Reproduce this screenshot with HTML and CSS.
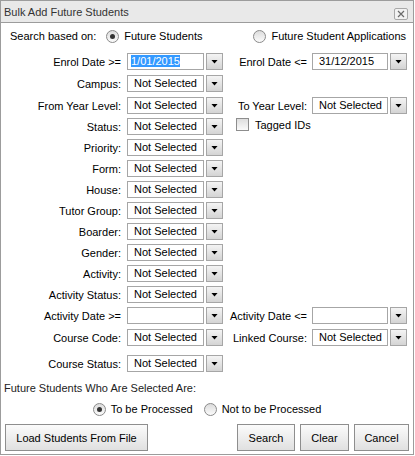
FILE: index.html
```html
<!DOCTYPE html>
<html>
<head>
<meta charset="utf-8">
<title>Bulk Add Future Students</title>
<link rel="stylesheet" href="styles.css">
</head>
<body>
<div class="dialog">
  <div class="titlebar">
    <span class="title">Bulk Add Future Students</span>
    <span class="close"><svg width="8" height="8" viewBox="0 0 8 8"><path d="M1 1L7 7M7 1L1 7" stroke="#6a6a6a" stroke-width="1.2" fill="none"/></svg></span>
  </div>
  <div class="content">
    <div class="search-row">
      <div class="grp"><span class="lead">Search based on:</span><span class="radio on"></span><span>Future Students</span></div>
      <div class="grp"><span class="radio"></span><span>Future Student Applications</span></div>
    </div>

    <div class="form">
      <div class="row">
        <span class="lbl1">Enrol Date &gt;=</span>
        <div class="combo"><div class="box first"><span class="hl">1/01/2015</span></div><div class="btn"></div></div>
        <span class="lbl2">Enrol Date &lt;=</span>
        <div class="combo"><div class="box">31/12/2015</div><div class="btn"></div></div>
      </div>
      <div class="row g1">
        <span class="lbl1">Campus:</span>
        <div class="combo"><div class="box">Not Selected</div><div class="btn"></div></div>
      </div>
      <div class="row g1">
        <span class="lbl1">From Year Level:</span>
        <div class="combo"><div class="box">Not Selected</div><div class="btn"></div></div>
        <span class="lbl2">To Year Level:</span>
        <div class="combo"><div class="box">Not Selected</div><div class="btn"></div></div>
      </div>
      <div class="row">
        <span class="lbl1">Status:</span>
        <div class="combo"><div class="box">Not Selected</div><div class="btn"></div></div>
        <div class="tag"><span class="chk"></span><span>Tagged IDs</span></div>
      </div>
      <div class="row">
        <span class="lbl1">Priority:</span>
        <div class="combo"><div class="box">Not Selected</div><div class="btn"></div></div>
      </div>
      <div class="row">
        <span class="lbl1">Form:</span>
        <div class="combo"><div class="box">Not Selected</div><div class="btn"></div></div>
      </div>
      <div class="row">
        <span class="lbl1">House:</span>
        <div class="combo"><div class="box">Not Selected</div><div class="btn"></div></div>
      </div>
      <div class="row">
        <span class="lbl1">Tutor Group:</span>
        <div class="combo"><div class="box">Not Selected</div><div class="btn"></div></div>
      </div>
      <div class="row">
        <span class="lbl1">Boarder:</span>
        <div class="combo"><div class="box">Not Selected</div><div class="btn"></div></div>
      </div>
      <div class="row">
        <span class="lbl1">Gender:</span>
        <div class="combo"><div class="box">Not Selected</div><div class="btn"></div></div>
      </div>
      <div class="row">
        <span class="lbl1">Activity:</span>
        <div class="combo"><div class="box">Not Selected</div><div class="btn"></div></div>
      </div>
      <div class="row">
        <span class="lbl1">Activity Status:</span>
        <div class="combo"><div class="box">Not Selected</div><div class="btn"></div></div>
      </div>
      <div class="row">
        <span class="lbl1">Activity Date &gt;=</span>
        <div class="combo"><div class="box"></div><div class="btn"></div></div>
        <span class="lbl2">Activity Date &lt;=</span>
        <div class="combo"><div class="box"></div><div class="btn"></div></div>
      </div>
      <div class="row g1">
        <span class="lbl1">Course Code:</span>
        <div class="combo"><div class="box">Not Selected</div><div class="btn"></div></div>
        <span class="lbl2">Linked Course:</span>
        <div class="combo"><div class="box">Not Selected</div><div class="btn"></div></div>
      </div>
      <div class="row g5">
        <span class="lbl1">Course Status:</span>
        <div class="combo"><div class="box">Not Selected</div><div class="btn"></div></div>
      </div>
    </div>

    <div class="note">Future Students Who Are Selected Are:</div>
    <div class="radios">
      <div class="grp"><span class="radio on"></span><span>To be Processed</span></div>
      <div class="grp second"><span class="radio"></span><span>Not to be Processed</span></div>
    </div>
    <div class="buttons">
      <button class="button load">Load Students From File</button>
      <button class="button search">Search</button>
      <button class="button clear">Clear</button>
      <button class="button cancel">Cancel</button>
    </div>
  </div>
</div>
</body>
</html>
```

FILE: styles.css
```css
body {
  margin: 0;
  background: #fff;
  font-family: "Liberation Sans", Arial, sans-serif;
  font-size: 11px;
  color: #000;
}

.dialog {
  width: 414px;
  height: 455px;
  box-sizing: border-box;
  border: 1px solid #9c9c9c;
  display: flex;
  flex-direction: column;
  background: #fff;
}

.titlebar {
  height: 21px;
  flex: none;
  border-bottom: 1px solid #9c9c9c;
  background: #e9e9e9;
  display: flex;
  align-items: center;
  justify-content: space-between;
  padding: 0 5px 0 3px;
  color: #333;
}

.close {
  align-self: flex-end;
  margin-bottom: 2px;
  width: 14px;
  height: 12px;
  box-sizing: border-box;
  border: 1px solid #a8a8a8;
  border-radius: 2px;
  background: #f2f2f2;
  display: flex;
  align-items: center;
  justify-content: center;
}

.content {
  padding-top: 3px;
}

.search-row {
  height: 20px;
  display: flex;
  align-items: center;
  justify-content: space-between;
  padding: 0 7px 0 9px;
}

.grp {
  display: flex;
  align-items: center;
  white-space: nowrap;
}

.lead {
  margin-right: 10px;
}

.radio {
  width: 13px;
  height: 13px;
  box-sizing: border-box;
  border-radius: 50%;
  border: 1px solid #8a8a8a;
  background: linear-gradient(#dcdcdc, #fbfbfb);
  margin-right: 5px;
  display: flex;
  align-items: center;
  justify-content: center;
}

.radio.on::after {
  content: "";
  width: 5px;
  height: 5px;
  border-radius: 50%;
  background: #333;
}

.form {
  margin-top: 5px;
}

.row {
  display: grid;
  grid-template-columns: 126px 96px 1fr 95px;
  height: 21px;
  align-items: center;
  padding-right: 6px;
  white-space: nowrap;
}

.row.g1 {
  margin-top: 1px;
}

.row.g5 {
  margin-top: 5px;
}

.lbl1 {
  text-align: right;
  padding-right: 6px;
}

.lbl2 {
  text-align: right;
  padding-right: 5px;
}

.combo {
  display: flex;
  height: 17px;
}

.box {
  flex: 1;
  min-width: 0;
  height: 17px;
  box-sizing: border-box;
  border: 1px solid #a6a6a6;
  background: #fff;
  line-height: 15px;
  padding-left: 6px;
  overflow: hidden;
}

.box.first {
  padding-left: 3px;
}

.hl {
  display: inline-block;
  vertical-align: top;
  margin-top: 1px;
  line-height: 12px;
  background: #3399ff;
  color: #fff;
}

.btn {
  width: 17px;
  height: 17px;
  flex: none;
  box-sizing: border-box;
  margin-left: 2px;
  border: 1px solid #a6a6a6;
  background: linear-gradient(#f4f4f4, #d4d4d4);
  display: flex;
  align-items: center;
  justify-content: center;
}

.btn::after {
  content: "";
  width: 7px;
  height: 4px;
  background: #000;
  clip-path: polygon(0 0, 100% 0, 50% 100%);
}

.tag {
  grid-column: 3 / 5;
  align-self: start;
  margin-top: 2px;
  margin-left: 13px;
  display: flex;
  align-items: center;
  height: 13px;
}

.chk {
  width: 13px;
  height: 13px;
  box-sizing: border-box;
  border: 1px solid #8d8d8d;
  background: linear-gradient(#dedede, #fafafa);
  margin-right: 6px;
}

.note {
  margin-top: 7px;
  padding-left: 3px;
  line-height: 14px;
  color: #222;
}

.radios {
  margin-top: 6px;
  height: 16px;
  display: flex;
  align-items: center;
  justify-content: center;
}

.radios .second {
  margin-left: 11px;
}

.buttons {
  margin-top: 7px;
  display: flex;
  gap: 5px;
  padding: 0 4px;
}

.button {
  height: 27px;
  box-sizing: border-box;
  border: 1px solid #8e8e8e;
  border-radius: 0;
  background: linear-gradient(#fbfbfb, #e0e0e0);
  padding: 0;
  margin: 0;
  font: inherit;
  color: #000;
  white-space: nowrap;
  text-align: center;
}

.button.load {
  width: 143px;
  margin-right: auto;
}

.button.search {
  width: 58px;
}

.button.clear {
  width: 49px;
}

.button.cancel {
  width: 55px;
}
```
